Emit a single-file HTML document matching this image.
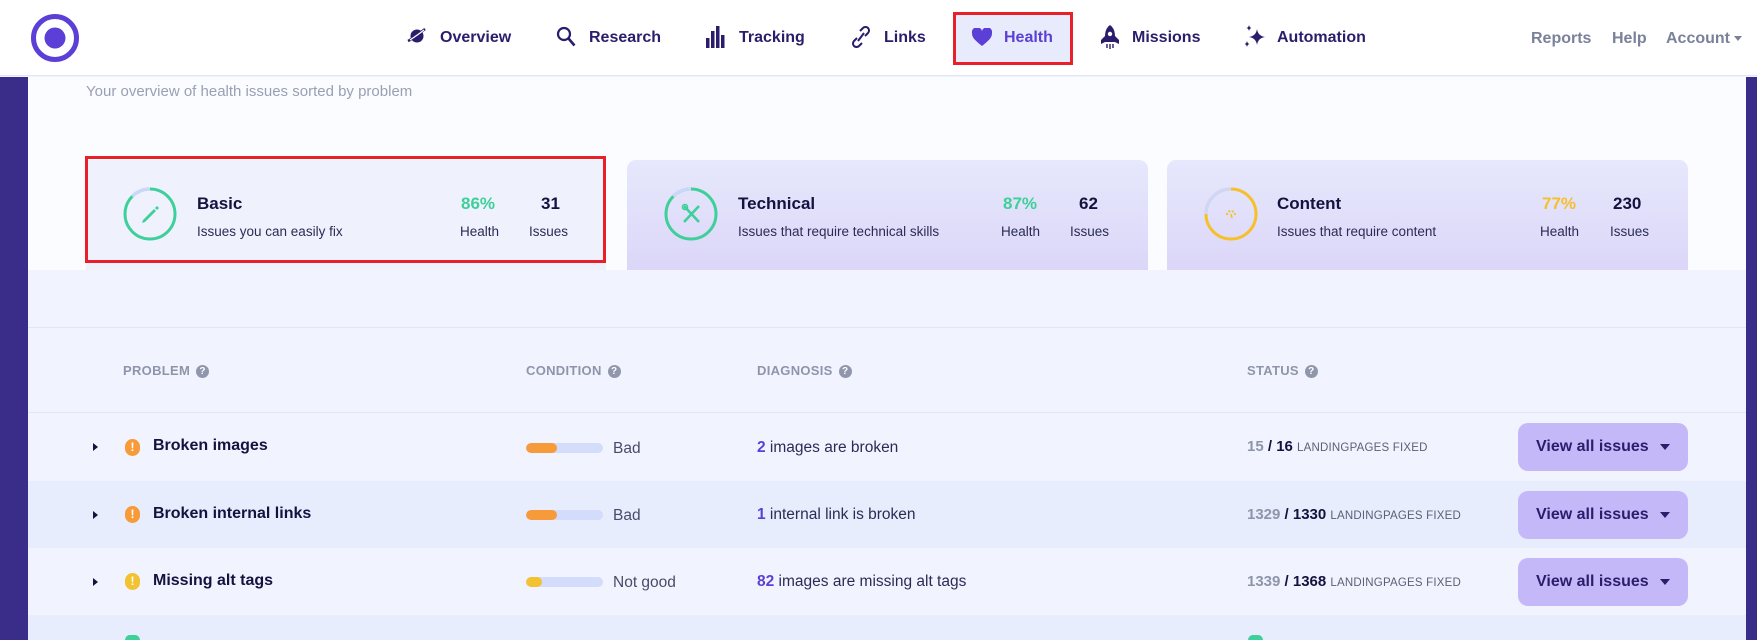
<!DOCTYPE html>
<html style="width:1757px;height:640px;overflow:hidden"><head><meta charset="utf-8">
<style>
*{margin:0;padding:0;box-sizing:border-box}
body{width:1757px;height:640px;overflow:hidden;position:relative;background:#f1f4fe;font-family:"Liberation Sans",sans-serif;color:#14123f}
.a{position:absolute;white-space:nowrap}
.nav{font-size:16px;font-weight:bold;color:#2b1d6b;top:29px}
.ni{position:absolute;top:26px}
.gray{color:#7a8199;font-weight:bold;font-size:16px;top:30px}
.card{position:absolute;top:160px;height:110px;border-radius:9px 9px 0 0;background:linear-gradient(#e6e8fc,#dcd6f8)}
.ct{font-size:17px;font-weight:bold;color:#14123f;top:194px}
.cs{font-size:13.5px;color:#2b2b55;top:224px}
.cv{font-size:17px;font-weight:bold;top:194px}
.th{font-size:13px;font-weight:bold;color:#8e95ab;top:363px;letter-spacing:.3px}
.q{display:inline-block;width:13px;height:13px;border-radius:50%;background:#9097ad;color:#fff;font-size:10px;text-align:center;line-height:13px;margin-left:6px;vertical-align:1px}
.row{position:absolute;left:28px;width:1718px}
.nm{font-size:16px;font-weight:bold;color:#14123f}
.ex{position:absolute;width:15px;height:17px;border-radius:8px;color:#fff;font-size:12px;font-weight:bold;text-align:center;line-height:17px}
.bar{position:absolute;width:77px;height:10px;border-radius:5px;background:#d3dcfa;overflow:hidden}
.bar i{position:absolute;left:0;top:0;height:10px;border-radius:5px}
.lbl{font-size:15.5px;color:#4a4a6a}
.dg{font-size:15.5px;color:#2b2b55}
.dg b{color:#5b3fd6}
.st{font-size:15px;font-weight:bold;color:#14123f}
.st span{color:#8e95ab}
.st small{font-size:11.5px;font-weight:normal;color:#5b6077;letter-spacing:.2px}
.btn{position:absolute;left:1518px;width:170px;height:48px;border-radius:10px;background:#c5b8f8;color:#2b1d6b;font-size:16px;font-weight:bold;padding:15px 0 0 18px}
.btn:after{content:"";position:absolute;right:18px;top:21px;border:5px solid transparent;border-top:6px solid #2b1d6b;border-bottom:0}
.caret{position:absolute;left:93px;border:4.5px solid transparent;border-left:5px solid #14123f;border-right:0}
</style></head><body>
<div class="a" style="left:0;top:0;width:1757px;height:76px;background:#fff;border-bottom:1px solid #dfe6f8"></div>
<svg class="a" style="left:30px;top:13px" width="50" height="50"><circle cx="25" cy="25" r="21.5" fill="none" stroke="#5b3fd6" stroke-width="5"/><circle cx="25" cy="25" r="10.5" fill="#5b3fd6"/></svg>

<svg class="ni" style="left:407px" width="20" height="20" viewBox="0 0 20 20"><ellipse cx="10" cy="10" rx="6.5" ry="6.5" fill="#2b1d6b"/><path d="M1 15c2-1 8-5 17-12" stroke="#2b1d6b" stroke-width="2.5" fill="none"/><path d="M3 14c3-2 9-6 14-10" stroke="#fff" stroke-width="1.2" fill="none"/></svg>
<div class="a nav" style="left:440px">Overview</div>
<svg class="ni" style="left:556px" width="20" height="22" viewBox="0 0 20 22"><circle cx="8" cy="8" r="6" fill="none" stroke="#2b1d6b" stroke-width="2.2"/><path d="M12.5 12.5l6 7" stroke="#2b1d6b" stroke-width="2.6"/></svg>
<div class="a nav" style="left:589px">Research</div>
<svg class="ni" style="left:706px" width="20" height="22" viewBox="0 0 20 22"><rect x="0" y="12" width="3.5" height="10" fill="#2b1d6b"/><rect x="5" y="5" width="3.5" height="17" fill="#2b1d6b"/><rect x="10" y="0" width="3.5" height="22" fill="#2b1d6b"/><rect x="15" y="9" width="3.5" height="13" fill="#2b1d6b"/></svg>
<div class="a nav" style="left:739px">Tracking</div>
<svg class="ni" style="left:851px" width="20" height="22" viewBox="0 0 20 22"><path d="M9 5l3-3a3.5 3.5 0 015 5l-3 3M11 17l-3 3a3.5 3.5 0 01-5-5l3-3M7 15l6-8" stroke="#2b1d6b" stroke-width="2" fill="none"/></svg>
<div class="a nav" style="left:884px">Links</div>

<div class="a" style="left:953px;top:12px;width:120px;height:53px;border:3px solid #e8202a;background:#e8ebfb"></div>
<svg class="ni" style="left:972px;top:28px" width="20" height="18" viewBox="0 0 20 18"><path d="M10 18C4 13 0 10 0 5.5A5 5 0 0110 3a5 5 0 0110 2.5C20 10 16 13 10 18z" fill="#5b3fd6"/></svg>
<div class="a nav" style="left:1004px;color:#5b3fd6">Health</div>
<svg class="ni" style="left:1100px;top:25px" width="20" height="24" viewBox="0 0 20 24"><path d="M10 0c4 3 5 7 5 12v5H5v-5c0-5 1-9 5-12z" fill="#2b1d6b"/><path d="M5 11L1 15v4l4-2zM15 11l4 4v4l-4-2z" fill="#2b1d6b"/><circle cx="10" cy="9" r="2.2" fill="#fff"/><path d="M7 19v4M10 19v5M13 19v4" stroke="#2b1d6b" stroke-width="1.4"/></svg>
<div class="a nav" style="left:1132px">Missions</div>
<svg class="ni" style="left:1244px;top:25px" width="22" height="24" viewBox="0 0 22 24"><path d="M13 4q1 7 8 8q-7 1-8 8q-1-7-8-8q7-1 8-8z" fill="#2b1d6b"/><path d="M5 0q.5 2.5 2.5 3q-2 .5-2.5 3q-.5-2.5-2.5-3q2-.5 2.5-3zM3 16q.5 2.5 2.5 3q-2 .5-2.5 3q-.5-2.5-2.5-3q2-.5 2.5-3z" fill="#2b1d6b"/></svg>
<div class="a nav" style="left:1277px">Automation</div>

<div class="a gray" style="left:1531px">Reports</div>
<div class="a gray" style="left:1612px">Help</div>
<div class="a gray" style="left:1666px">Account</div>
<div class="a" style="left:1734px;top:36px;border:4.5px solid transparent;border-top:5px solid #7a8199;border-bottom:0"></div>

<div class="a" style="left:0;top:77px;width:28px;height:563px;background:#3a2d8a"></div>
<div class="a" style="left:1746px;top:77px;width:11px;height:563px;background:#3a2d8a"></div>

<div class="a" style="left:28px;top:77px;width:1718px;height:193px;background:#fbfcff"></div>
<div class="a" style="left:86px;top:83px;font-size:15px;color:#9aa0b3">Your overview of health issues sorted by problem</div>

<div class="a" style="left:86px;top:160px;width:520px;height:110px;background:#eff2fd"></div>
<div class="a" style="left:85px;top:156px;width:521px;height:107px;border:3px solid #e8202a"></div>
<div class="card" style="left:627px;width:521px"></div>
<div class="card" style="left:1167px;width:521px"></div>

<svg class="a" style="left:123px;top:187px" width="54" height="54"><circle cx="27" cy="27" r="25" fill="none" stroke="#3ecf9a" stroke-width="3"/><path d="M9.3 9.3A25 25 0 0127 2" stroke="#cdd6fb" stroke-width="3" fill="none"/><path d="M22 35l-3 1 1-3 11-11 2 2z" fill="#3ecf9a"/><path d="M32 21l2-2 2 2-2 2z" fill="#3ecf9a"/></svg>
<div class="a ct" style="left:197px">Basic</div>
<div class="a cs" style="left:197px">Issues you can easily fix</div>
<div class="a cv" style="left:461px;color:#3ecf9a">86%</div>
<div class="a cv" style="left:541px">31</div>
<div class="a cs" style="left:460px">Health</div>
<div class="a cs" style="left:529px">Issues</div>

<svg class="a" style="left:664px;top:187px" width="54" height="54"><circle cx="27" cy="27" r="25" fill="none" stroke="#3ecf9a" stroke-width="3"/><path d="M9.3 9.3A25 25 0 0127 2" stroke="#cdd6fb" stroke-width="3" fill="none"/><path d="M20 19l15 16M35 19L20 35" stroke="#3ecf9a" stroke-width="2.6"/><circle cx="21" cy="20" r="2.5" fill="none" stroke="#3ecf9a" stroke-width="1.6"/></svg>
<div class="a ct" style="left:738px">Technical</div>
<div class="a cs" style="left:738px">Issues that require technical skills</div>
<div class="a cv" style="left:1003px;color:#3ecf9a">87%</div>
<div class="a cv" style="left:1079px">62</div>
<div class="a cs" style="left:1001px">Health</div>
<div class="a cs" style="left:1070px">Issues</div>

<svg class="a" style="left:1204px;top:187px" width="54" height="54"><circle cx="27" cy="27" r="25" fill="none" stroke="#f5c02a" stroke-width="3"/><path d="M2 27A25 25 0 0127 2" stroke="#cdd6fb" stroke-width="3" fill="none"/><path d="M23 28a4 4 0 018 0" stroke="#f5c02a" stroke-width="2" stroke-dasharray="2 1.5" fill="none"/><path d="M27 27l1 4" stroke="#f5c02a" stroke-width="1.6"/></svg>
<div class="a ct" style="left:1277px">Content</div>
<div class="a cs" style="left:1277px">Issues that require content</div>
<div class="a cv" style="left:1542px;color:#f5c02a">77%</div>
<div class="a cv" style="left:1613px">230</div>
<div class="a cs" style="left:1540px">Health</div>
<div class="a cs" style="left:1610px">Issues</div>

<div class="a" style="left:28px;top:327px;width:1718px;height:1px;background:#dfe6f8"></div>
<div class="a th" style="left:123px">PROBLEM<span class="q">?</span></div>
<div class="a th" style="left:526px">CONDITION<span class="q">?</span></div>
<div class="a th" style="left:757px">DIAGNOSIS<span class="q">?</span></div>
<div class="a th" style="left:1247px">STATUS<span class="q">?</span></div>
<div class="a" style="left:28px;top:412px;width:1718px;height:1px;background:#dfe6f8"></div>

<div class="row" style="top:481px;height:67px;background:#e7edfc"></div>
<div class="row" style="top:615px;height:25px;background:#e7edfc"></div>

<div class="caret" style="top:443px"></div>
<div class="ex" style="left:125px;top:439px;background:#f79a3a">!</div>
<div class="a nm" style="left:153px;top:437px">Broken images</div>
<div class="bar" style="left:526px;top:443px"><i style="width:31px;background:#f79a3a"></i></div>
<div class="a lbl" style="left:613px;top:440px">Bad</div>
<div class="a dg" style="left:757px;top:439px"><b>2</b> images are broken</div>
<div class="a st" style="left:1247px;top:438px"><span>15</span> / 16 <small>LANDINGPAGES FIXED</small></div>
<div class="btn" style="top:423px">View all issues</div>

<div class="caret" style="top:511px"></div>
<div class="ex" style="left:125px;top:506px;background:#f79a3a">!</div>
<div class="a nm" style="left:153px;top:505px">Broken internal links</div>
<div class="bar" style="left:526px;top:510px"><i style="width:31px;background:#f79a3a"></i></div>
<div class="a lbl" style="left:613px;top:507px">Bad</div>
<div class="a dg" style="left:757px;top:506px"><b>1</b> internal link is broken</div>
<div class="a st" style="left:1247px;top:506px"><span>1329</span> / 1330 <small>LANDINGPAGES FIXED</small></div>
<div class="btn" style="top:491px">View all issues</div>

<div class="caret" style="top:578px"></div>
<div class="ex" style="left:125px;top:573px;background:#f2c230">!</div>
<div class="a nm" style="left:153px;top:572px">Missing alt tags</div>
<div class="bar" style="left:526px;top:577px"><i style="width:16px;background:#f2c230"></i></div>
<div class="a lbl" style="left:613px;top:574px">Not good</div>
<div class="a dg" style="left:757px;top:573px"><b>82</b> images are missing alt tags</div>
<div class="a st" style="left:1247px;top:573px"><span>1339</span> / 1368 <small>LANDINGPAGES FIXED</small></div>
<div class="btn" style="top:558px">View all issues</div>

<div class="a" style="left:125px;top:635px;width:15px;height:5px;border-radius:8px 8px 0 0;background:#3ecf9a"></div>
<div class="a" style="left:1248px;top:635px;width:15px;height:5px;border-radius:8px 8px 0 0;background:#3ecf9a"></div>
</body></html>
